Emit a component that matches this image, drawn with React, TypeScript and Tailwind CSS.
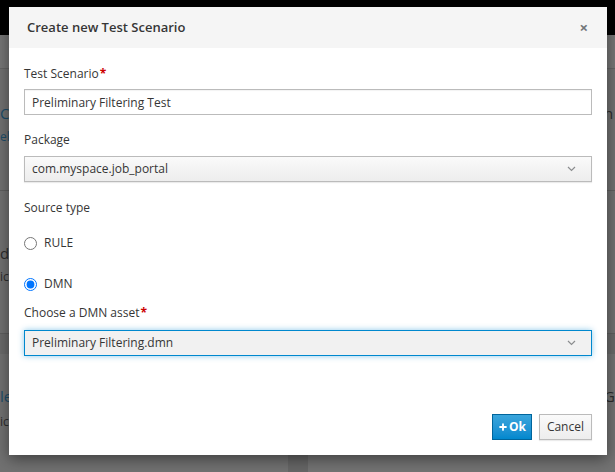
import { Plus } from 'lucide-react';

function Chevron() {
    return (
        <svg width="9" height="6" viewBox="0 0 9 6" className="text-[#8b8d8f]">
            <path d="M1 1l3.5 3.5L8 1" fill="none" stroke="currentColor" strokeWidth="1.2" />
        </svg>
    );
}

function Label({ text, required }: { text: string; required?: boolean }) {
    return (
        <div className="h-4 leading-4 text-[12px] text-[#363636]">
            {text}
            {required && <span className="ml-[1px] text-[#c00] font-bold">*</span>}
        </div>
    );
}

function Backdrop() {
    return (
        <div className="absolute inset-0 flex flex-col bg-[#717171]">
            <div className="h-[35px] bg-black" />
            <div className="flex flex-1">
                {/* left column, only its edge shows past the modal */}
                <div className="w-[290px] flex flex-col text-[15px] text-[#2c2c2c]">
                    <div className="h-[34px] border-b border-[#656565] bg-[#767676]" />
                    <div className="h-[122px] border-b border-[#5f5f5f] pt-[34px]">
                        <div className="text-[#1d4d6a] leading-5">C</div>
                        <div className="mt-[6px] text-[12px] text-[#1d4d6a] leading-4">el</div>
                    </div>
                    <div className="h-[143px] border-b border-[#5f5f5f] pt-[52px]">
                        <div className="leading-5">d</div>
                        <div className="mt-[6px] text-[12px] leading-4">ic</div>
                    </div>
                    <div className="h-[20px] bg-[#6a6a6a]" />
                    <div className="flex-1 pt-[32px]">
                        <div className="text-[#1d4d6a] leading-5">le</div>
                        <div className="mt-[8px] text-[12px] leading-4">ic</div>
                    </div>
                </div>
                <div className="w-[20px] bg-[#666]" />
                {/* right column */}
                <div className="flex-1 flex flex-col text-[15px] text-[#2c2c2c]">
                    <div className="h-[34px] border-b border-[#656565] bg-[#767676]" />
                    <div className="h-[122px] border-b border-[#5f5f5f] pt-[34px] pl-[296px]">
                        <div className="leading-5">h</div>
                    </div>
                    <div className="h-[143px] border-b border-[#5f5f5f]" />
                    <div className="h-[20px] bg-[#6a6a6a]" />
                    <div className="flex-1 bg-[#737373] pt-[32px] pl-[296px]">
                        <div className="leading-5">G</div>
                    </div>
                </div>
            </div>
        </div>
    );
}

export default function App() {
    return (
        <div className="relative w-[615px] h-[472px] overflow-hidden" style={{ fontFamily: '"Open Sans", "Noto Sans", sans-serif' }}>
            <Backdrop />

            {/* Modal */}
            <div className="absolute left-[9px] top-[7px] w-[598px] h-[448px] bg-white flex flex-col shadow-[0_4px_14px_rgba(0,0,0,0.45)]">
                <div className="h-[41px] bg-[#f5f5f5] flex items-center justify-between pl-[18px] pr-[19px]">
                    <span className="text-[13px] font-semibold text-[#363636]">Create new Test Scenario</span>
                    <span className="text-[15px] font-bold text-[#72767b] leading-none">×</span>
                </div>

                <div className="flex flex-col px-[15px] pt-[18px]">
                    <Label text="Test Scenario" required />
                    <input
                        readOnly
                        value="Preliminary Filtering Test"
                        className="mt-[7px] h-[26px] w-full border border-[#bbb] px-[7px] text-[12px] text-[#363636] outline-none shadow-[inset_0_1px_1px_rgba(3,3,3,0.05)]"
                    />

                    <div className="mt-[17px]">
                        <Label text="Package" />
                    </div>
                    <div className="mt-[8px] h-[26px] w-full border border-[#bbb] bg-gradient-to-b from-[#fafafa] to-[#ededed] flex items-center justify-between pl-[7px] pr-[15px] text-[12px] text-[#363636] shadow-[0_1px_1px_rgba(3,3,3,0.08)]">
                        <span>com.myspace.job_portal</span>
                        <Chevron />
                    </div>

                    <div className="mt-[18px]">
                        <Label text="Source type" />
                    </div>

                    <label className="mt-[19px] h-4 flex items-center gap-[7px] text-[12px] text-[#363636]">
                        <input type="radio" name="src" readOnly className="m-0 w-[13px] h-[13px] accent-[#0075ff]" />
                        RULE
                    </label>
                    <label className="mt-[25px] h-4 flex items-center gap-[7px] text-[12px] text-[#363636]">
                        <input type="radio" name="src" checked readOnly className="m-0 w-[13px] h-[13px] accent-[#0075ff]" />
                        DMN
                    </label>

                    <div className="mt-[13px]">
                        <Label text="Choose a DMN asset" required />
                    </div>
                    <div className="mt-[9px] h-[26px] w-full border border-[#0088ce] bg-[#f1f1f1] flex items-center justify-between pl-[7px] pr-[15px] text-[12px] text-[#363636] shadow-[0_0_6px_rgba(0,136,206,0.45)]">
                        <span>Preliminary Filtering.dmn</span>
                        <Chevron />
                    </div>
                </div>

                <div className="mt-auto flex justify-end gap-[7px] pr-[15px] pb-[15px]">
                    <button className="h-[26px] pl-[5px] pr-[5px] flex items-center gap-[1px] border border-[#00659c] bg-gradient-to-b from-[#39a5dc] to-[#0088ce] text-white text-[12px] font-bold">
                        <Plus size={10} strokeWidth={4.5} />
                        Ok
                    </button>
                    <button className="h-[26px] px-[7px] border border-[#bbb] bg-gradient-to-b from-[#fafafa] to-[#ededed] text-[#363636] text-[12px] shadow-[0_1px_1px_rgba(3,3,3,0.08)]">
                        Cancel
                    </button>
                </div>
            </div>
        </div>
    );
}
